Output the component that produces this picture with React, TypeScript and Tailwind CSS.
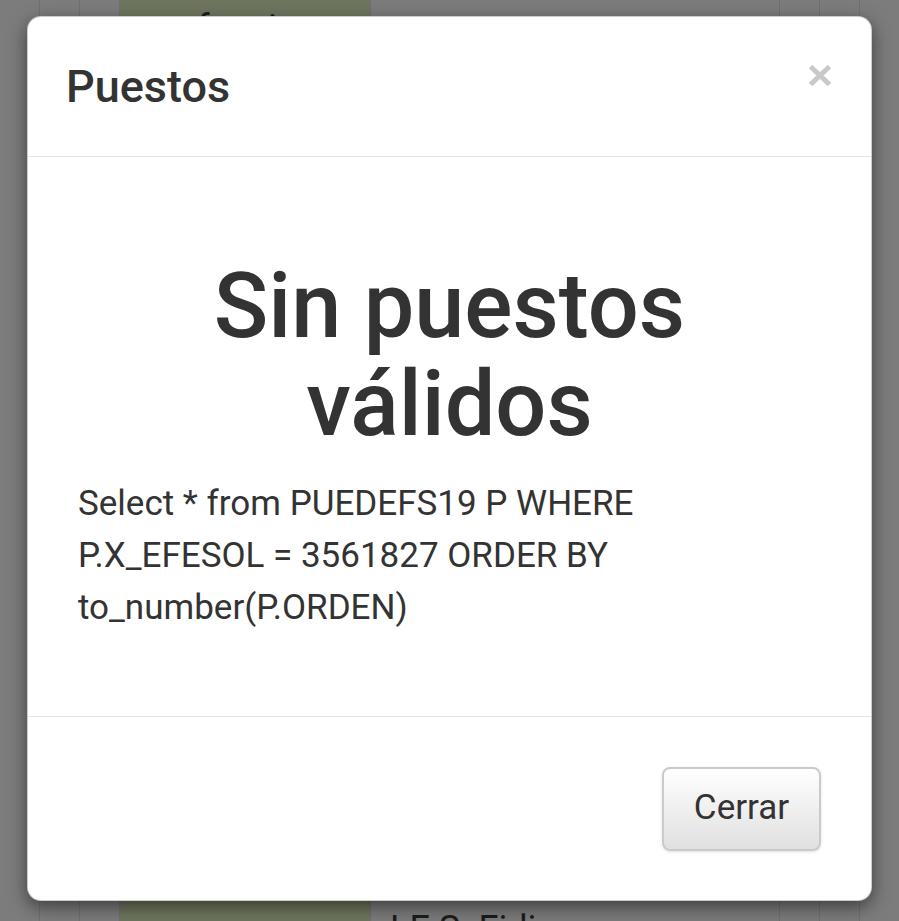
import React from "react";

const CloseIcon = () => (
  <svg width="24" height="23" viewBox="0 0 24 23" className="mt-[47px] self-start">
    <path d="M2.5 2.5 L21.5 20.5 M21.5 2.5 L2.5 20.5" stroke="#c9c9c9" strokeWidth="5" strokeLinecap="butt" />
  </svg>
);

const Backdrop = () => (
  <div className="flex h-full w-full">
    <div className="w-[40px] border-r border-[#707070]" />
    <div className="w-[40px] border-r border-[#707070]" />
    <div className="w-[40px] border-r border-[#707070]" />
    <div className="w-[250px] bg-[#6f765f]">
      <p className="pl-[77px] pt-[6px] text-[36px] leading-[44px] text-[#1c1c1c]">funciones</p>
    </div>
    <div className="w-[410px] border-l border-r border-[#707070]">
      <p className="ml-[19px] mt-[907px] text-[36px] leading-[44px] text-[#1c1c1c]">LE S. Fidias</p>
    </div>
    <div className="w-[40px] border-r border-[#707070]" />
    <div className="w-[40px] border-r border-[#707070]" />
    <div className="flex-1" />
  </div>
);

export default function App() {
  return (
    <div className="relative h-[921px] w-[899px] overflow-hidden bg-[#7c7c7c] font-['Roboto',sans-serif] text-[#333]">
      <Backdrop />

      <div className="absolute left-[27px] top-[16px] flex h-[885px] w-[845px] flex-col rounded-[14px] border border-black/20 bg-white shadow-[0_6px_18px_rgba(0,0,0,0.5)]">
        <div className="flex h-[140px] items-center justify-between border-b border-[#e5e5e5] pl-[38px] pr-[39px]">
          <h4 className="text-[45px] font-medium">Puestos</h4>
          <CloseIcon />
        </div>

        <div className="flex-1 pt-[101px]">
          <h1 className="px-[50px] text-center text-[90px] font-medium leading-[98px]">
            Sin puestos válidos
          </h1>
          <p className="mt-[24px] pl-[50px] pr-[80px] text-[35px] leading-[52px]">
            Select * from PUEDEFS19 P WHERE P.X_EFESOL = 3561827 ORDER BY to_number(P.ORDEN)
          </p>
        </div>

        <div className="flex h-[184px] items-center justify-end border-t border-[#e5e5e5] pr-[50px]">
          <button className="h-[84px] w-[159px] rounded-[8px] border-2 border-[#cacaca] bg-linear-to-b from-white to-[#e0e0e0] text-[35px] text-[#333] shadow-[0_1px_3px_rgba(0,0,0,0.12)]">
            Cerrar
          </button>
        </div>
      </div>
    </div>
  );
}
